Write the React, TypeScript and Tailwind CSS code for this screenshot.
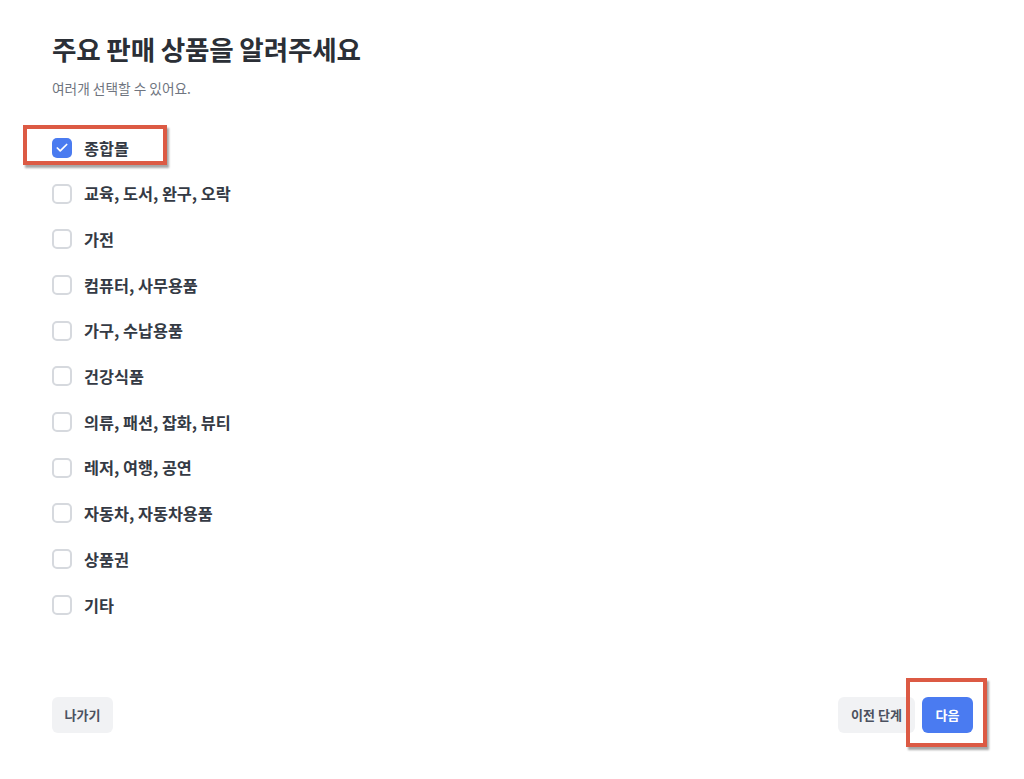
import { Check } from 'lucide-react';

const categories = [
  { id: 'mall', label: '종합몰', checked: true },
  { id: 'edu', label: '교육, 도서, 완구, 오락' },
  { id: 'appliance', label: '가전' },
  { id: 'computer', label: '컴퓨터, 사무용품' },
  { id: 'furniture', label: '가구, 수납용품' },
  { id: 'health', label: '건강식품' },
  { id: 'fashion', label: '의류, 패션, 잡화, 뷰티' },
  { id: 'leisure', label: '레저, 여행, 공연' },
  { id: 'car', label: '자동차, 자동차용품' },
  { id: 'voucher', label: '상품권' },
  { id: 'etc', label: '기타' },
];

export default function App() {
  return (
    <div
      className="relative flex h-[779px] w-full flex-col bg-white text-[#333842]"
      style={{ fontFamily: '"Noto Sans CJK KR", "Noto Sans", sans-serif' }}
    >
      <div className="flex flex-1 flex-col px-[52px] pt-8">
        {/* 제목 */}
        <h1 className="h-[34px] text-[26.6px] font-bold leading-[34px] tracking-[-0.2px] text-[#2b2f36]">
          주요 판매 상품을 알려주세요
        </h1>
        <p className="mt-[13px] h-[18px] text-[13.7px] leading-[18px] text-[#6f7580]">여러개 선택할 수 있어요.</p>

        {/* 카테고리 목록 */}
        <ul className="mt-[28px] flex flex-col">
          {categories.map((item) => (
            <li key={item.id} className="flex h-[45.7px] items-center gap-3">
              {item.checked ? (
                <span className="flex h-5 w-5 items-center justify-center rounded-[5px] bg-[#4a7bf0]">
                  <Check className="h-3.5 w-3.5 text-white" strokeWidth={3} />
                </span>
              ) : (
                <span className="h-5 w-5 rounded-[5px] border-2 border-[#d6d9de] bg-white" />
              )}
              <span className="text-[16.3px] font-semibold text-[#343a44]">{item.label}</span>
            </li>
          ))}
        </ul>
      </div>

      {/* 하단 버튼 */}
      <div className="flex items-center justify-between pb-[46px] pl-[52px] pr-[51px]">
        <button className="h-9 w-[61px] rounded-md bg-[#f1f2f4] text-[13px] font-semibold text-[#4b5160]">나가기</button>
        <div className="flex items-center gap-[7px]">
          <button className="h-9 w-[77px] rounded-md bg-[#f1f2f4] text-[13px] font-semibold text-[#4b5160]">이전 단계</button>
          <button className="h-9 w-[51px] rounded-md bg-[#4a7bf1] text-[13px] font-semibold text-white">다음</button>
        </div>
      </div>

      {/* 강조 표시 박스 */}
      <div className="pointer-events-none absolute left-[23px] top-[125px] h-[40px] w-[144px] border-4 border-[#dc5a44] shadow-[2px_3px_2px_rgba(0,0,0,0.35)]" />
      <div className="pointer-events-none absolute left-[906px] top-[678px] h-[69px] w-[81px] border-4 border-[#dc5a44] shadow-[2px_3px_2px_rgba(0,0,0,0.35)]" />
    </div>
  );
}
